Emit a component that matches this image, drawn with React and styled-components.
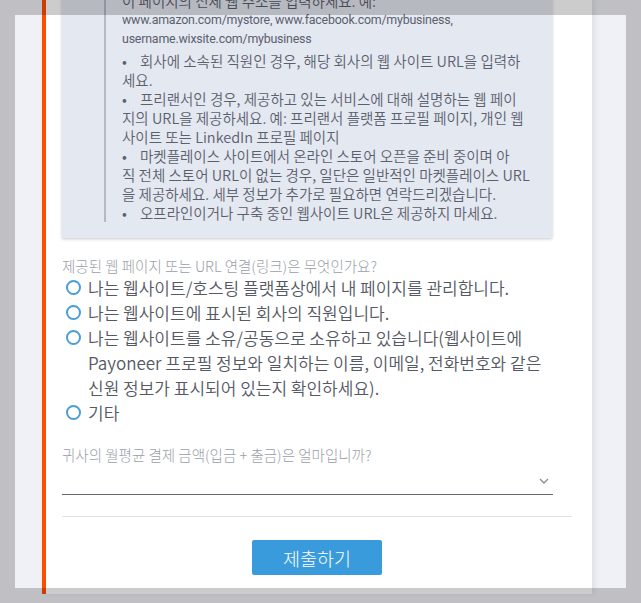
import React from 'react';
import styled, { createGlobalStyle } from 'styled-components';

const Global = createGlobalStyle`
  html, body { margin: 0; padding: 0; background: #f0f1f6; overflow: hidden; }
  body { font-family: "Noto Sans CJK KR", Roboto, sans-serif; }
`;

const Page = styled.div`
  width: 641px;
  height: 603px;
  overflow: hidden;
  box-sizing: border-box;
  padding-left: 42px;
`;

const Card = styled.div`
  width: 550px;
  height: 100%;
  box-sizing: border-box;
  background: #fff;
  border-left: 4px solid #ff4d00;
  box-shadow: 3px 0 6px rgba(0, 0, 0, 0.07);
  padding: 0 20px 0 16px;
`;

const InfoBox = styled.div`
  width: 490px;
  box-sizing: border-box;
  margin-top: -9px;
  background: #e4e8f1;
  box-shadow: 0 1px 3px rgba(0, 0, 0, 0.22);
  padding: 0 10px 16px 42px;
`;

const Quote = styled.div`
  border-left: 2px solid #b4b9c4;
  padding-left: 16px;
  font-size: 14.5px;
  font-weight: 350;
  line-height: 19px;
  color: #5b606d;
  white-space: nowrap;
`;

const Para = styled.div`
  margin-top: ${(p) => (p.$gap ? '3px' : '0')};
`;

const LatinLine = styled.div`
  font-family: Roboto, sans-serif;
  font-size: 12.4px;
  font-weight: 400;
  line-height: 19px;
  letter-spacing: -0.2px;
`;

const Bullet = styled.span`
  display: inline-block;
  width: 18px;
`;

const Question = styled.div`
  margin-top: ${(p) => p.$top}px;
  font-size: 14.5px;
  font-weight: 300;
  line-height: 19px;
  color: #9a9ea8;
`;

const RadioList = styled.div`
  display: flex;
  flex-direction: column;
`;

const RadioItem = styled.label`
  display: flex;
  align-items: flex-start;
  gap: 7px;
  padding-left: 4px;
  font-size: 17px;
  font-weight: 350;
  line-height: 25px;
  color: #555964;
  white-space: nowrap;
`;

const Circle = styled.span`
  flex: none;
  width: 15px;
  height: 15px;
  box-sizing: border-box;
  margin-top: 5px;
  border: 2px solid #4a9dd6;
  border-radius: 50%;
`;

const Select = styled.div`
  width: 491px;
  height: 31px;
  box-sizing: border-box;
  border-bottom: 1px solid #666b73;
  display: flex;
  align-items: center;
  justify-content: flex-end;
  padding: 4px 4px 0 0;
`;

const Divider = styled.div`
  margin-top: 21px;
  height: 1px;
  background: #dfe3ea;
`;

const ButtonRow = styled.div`
  display: flex;
  justify-content: center;
  margin-top: 23px;
`;

const Submit = styled.button`
  width: 130px;
  height: 35px;
  border: none;
  border-radius: 2px;
  background: #3a9bdc;
  color: #fff;
  font-family: "Noto Sans CJK KR", sans-serif;
  font-size: 18.5px;
  font-weight: 300;
  padding: 0;
`;

const Scrim = styled.div`
  position: fixed;
  left: 15px;
  top: 15px;
  width: 611px;
  height: 573px;
  box-shadow: 0 0 0 2000px rgba(0, 0, 0, 0.2);
  pointer-events: none;
`;

const options = [
  ['나는 웹사이트/호스팅 플랫폼상에서 내 페이지를 관리합니다.'],
  ['나는 웹사이트에 표시된 회사의 직원입니다.'],
  [
    '나는 웹사이트를 소유/공동으로 소유하고 있습니다(웹사이트에',
    'Payoneer 프로필 정보와 일치하는 이름, 이메일, 전화번호와 같은',
    '신원 정보가 표시되어 있는지 확인하세요).',
  ],
  ['기타'],
];

const bullets = [
  ['회사에 소속된 직원인 경우, 해당 회사의 웹 사이트 URL을 입력하', '세요.'],
  [
    '프리랜서인 경우, 제공하고 있는 서비스에 대해 설명하는 웹 페이',
    '지의 URL을 제공하세요. 예: 프리랜서 플랫폼 프로필 페이지, 개인 웹',
    '사이트 또는 LinkedIn 프로필 페이지',
  ],
  [
    '마켓플레이스 사이트에서 온라인 스토어 오픈을 준비 중이며 아',
    '직 전체 스토어 URL이 없는 경우, 일단은 일반적인 마켓플레이스 URL',
    '을 제공하세요. 세부 정보가 추가로 필요하면 연락드리겠습니다.',
  ],
  ['오프라인이거나 구축 중인 웹사이트 URL은 제공하지 마세요.'],
];

const Lines = ({ lines }) =>
  lines.map((l, i) => (
    <React.Fragment key={i}>
      {i > 0 && <br />}
      {l}
    </React.Fragment>
  ));

export default function App() {
  return (
    <>
      <Global />
      <Page>
        <Card>
          <InfoBox>
            <Quote>
              <Para>이 페이지의 전체 웹 주소를 입력하세요. 예:</Para>
              <LatinLine>www.amazon.com/mystore, www.facebook.com/mybusiness,</LatinLine>
              <LatinLine>username.wixsite.com/mybusiness</LatinLine>
              {bullets.map((b, i) => (
                <Para key={i} $gap={i === 0}>
                  <Bullet>•</Bullet>
                  <Lines lines={b} />
                </Para>
              ))}
            </Quote>
          </InfoBox>
          <Question $top={18}>제공된 웹 페이지 또는 URL 연결(링크)은 무엇인가요?</Question>
          <RadioList>
            {options.map((o, i) => (
              <RadioItem key={i}>
                <Circle />
                <span>
                  <Lines lines={o} />
                </span>
              </RadioItem>
            ))}
          </RadioList>
          <Question $top={20}>귀사의 월평균 결제 금액(입금 + 출금)은 얼마입니까?</Question>
          <Select>
            <svg width="10" height="6" viewBox="0 0 10 6">
              <path d="M1 1l4 4 4-4" fill="none" stroke="#8a8e96" strokeWidth="1.4" />
            </svg>
          </Select>
          <Divider />
          <ButtonRow>
            <Submit>제출하기</Submit>
          </ButtonRow>
        </Card>
      </Page>
      <Scrim />
    </>
  );
}
